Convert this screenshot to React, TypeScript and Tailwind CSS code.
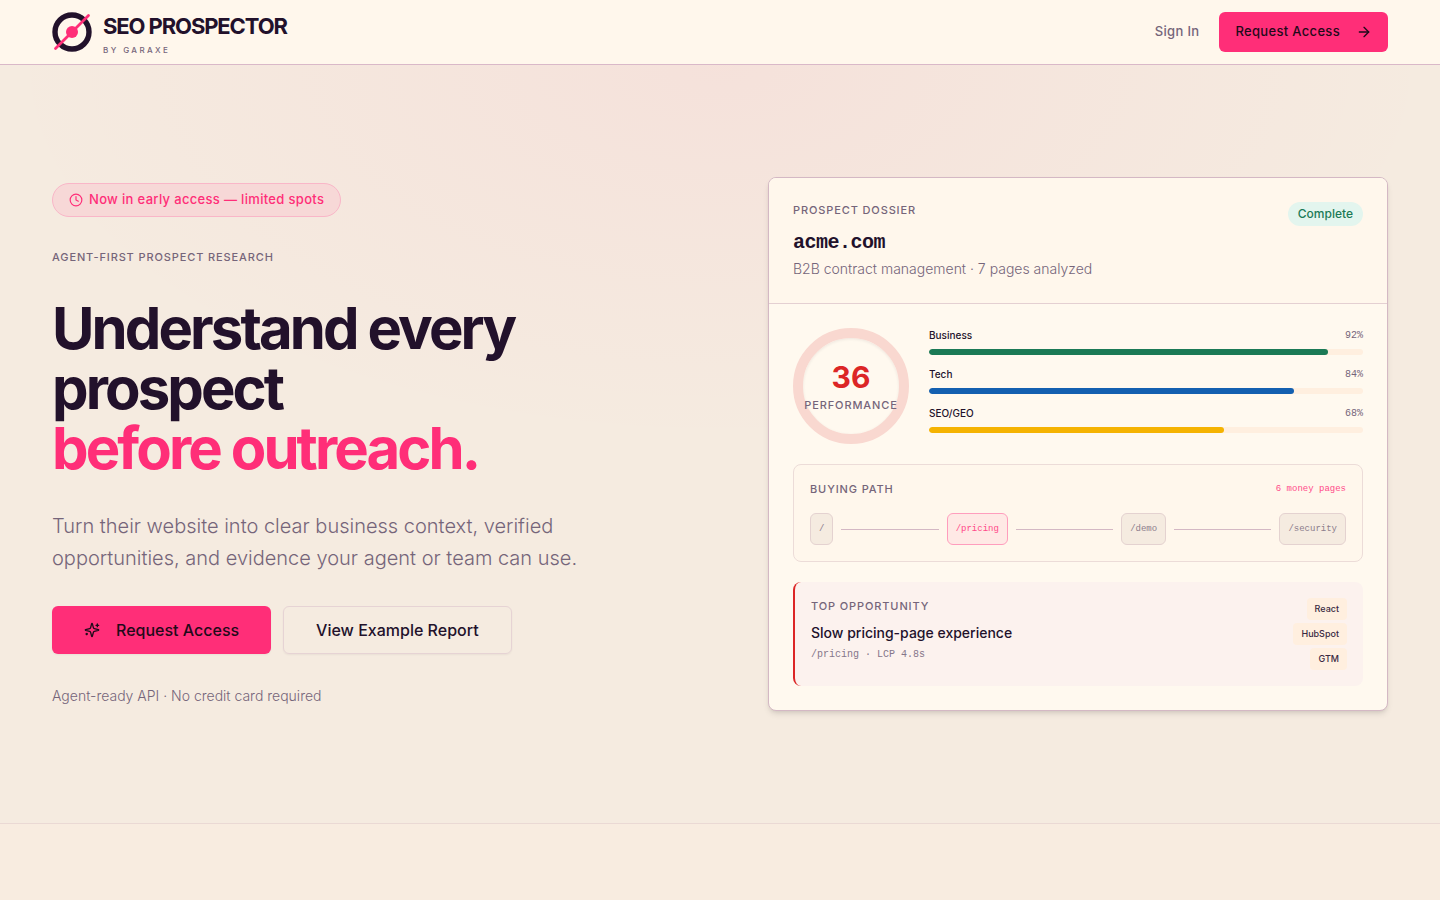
import React from 'react';
import { ArrowRight, Clock } from 'lucide-react';

interface Score {
  label: string;
  value: number;
  color: string;
}

const scores: Score[] = [
  { label: 'Business', value: 92, color: 'bg-[#1b7a56]' },
  { label: 'Tech', value: 84, color: 'bg-[#1460b0]' },
  { label: 'SEO/GEO', value: 68, color: 'bg-[#f5b301]' },
];

const path = ['/', '/pricing', '/demo', '/security'];
const stack = ['React', 'HubSpot', 'GTM'];

const Label: React.FC<{ children: React.ReactNode }> = ({ children }) => (
  <p className="text-[11px] leading-[17px] font-medium tracking-[0.08em] uppercase text-[#75657a]">
    {children}
  </p>
);

const SparklesIcon = () => (
  <svg
    width="16"
    height="16"
    viewBox="0 0 24 24"
    fill="none"
    stroke="currentColor"
    strokeWidth="2"
    strokeLinecap="round"
    strokeLinejoin="round"
    aria-hidden="true"
  >
    <path d="M9.937 15.5A2 2 0 0 0 8.5 14.063l-6.135-1.582a.5.5 0 0 1 0-.962L8.5 9.936A2 2 0 0 0 9.937 8.5l1.582-6.135a.5.5 0 0 1 .963 0L14.063 8.5A2 2 0 0 0 15.5 9.937l6.135 1.581a.5.5 0 0 1 0 .964L15.5 14.063a2 2 0 0 0-1.437 1.437l-1.582 6.135a.5.5 0 0 1-.963 0z" />
    <path d="M20 3v4" />
    <path d="M22 5h-4" />
    <path d="M4 17v2" />
    <path d="M5 18H3" />
  </svg>
);

const Logo = () => (
  <a href="#" className="flex items-center gap-[11px]">
    <svg width="40" height="40" viewBox="0 0 40 40" fill="none" aria-hidden="true">
      <circle cx="20" cy="20" r="17" stroke="#22112b" strokeWidth="5.4" />
      <path d="M3.5 36.5 36.5 3.5" stroke="#ff2e78" strokeWidth="2.8" strokeLinecap="round" />
      <circle cx="20" cy="20" r="6" fill="#ff2e78" />
    </svg>
    <span className="flex flex-col gap-1 pt-1">
      <span className="text-[22px] leading-7 font-bold tracking-tighter text-[#22112b]">SEO PROSPECTOR</span>
      <span className="text-[8px] leading-3 font-medium tracking-[0.3em] text-[#75657a]">BY GARAXE</span>
    </span>
  </a>
);

const Header = () => (
  <header className="bg-[#fff7ec] border-b border-[#d9b8c8]">
    <div className="h-16 px-13 flex items-center justify-between">
      <Logo />
      <nav className="flex items-center gap-5">
        <a href="#" className="text-[13px] font-medium tracking-wide text-[#75657a]">Sign In</a>
        <button className="h-10 px-4 rounded-md bg-[#ff2e78] text-[#1f0a1a] text-[13px] font-medium tracking-wide flex items-center gap-4">
          Request Access
          <ArrowRight size={16} />
        </button>
      </nav>
    </div>
  </header>
);

const ScoreBar: React.FC<{ score: Score }> = ({ score }) => (
  <div>
    <div className="flex justify-between text-[10px] leading-[15px] mb-1.5">
      <span className="font-medium text-[#22112b]">{score.label}</span>
      <span className="font-['Liberation_Mono',monospace] text-[#75657a]">{score.value}%</span>
    </div>
    <div className="h-1.5 rounded-full bg-[#ffefdf] overflow-hidden">
      <div className={`h-full rounded-full ${score.color}`} style={{ width: `${score.value}%` }} />
    </div>
  </div>
);

const BuyingPath = () => (
  <section className="border border-[#ecdcd8] bg-[#fff7ec] rounded-lg p-4">
    <div className="h-4 mb-4 flex items-center justify-between">
      <Label>Buying path</Label>
      <span className="pt-0.5 font-['Liberation_Mono',monospace] text-[9px] text-[#ff4a8a]">6 money pages</span>
    </div>
    <div className="flex items-center gap-2">
      {path.map((page, i) => (
        <React.Fragment key={page}>
          {i > 0 && <span className="flex-1 h-px bg-[#d4b8c4]" />}
          <span
            className={`h-8 px-2 pt-0.5 flex items-center rounded-md border font-['Liberation_Mono',monospace] text-[9px] ${
              page === '/pricing'
                ? 'border-[#ff9dbd] bg-[#ffe9e5] text-[#ff4a8a]'
                : 'border-[#e4d2d0] bg-[#f5ebe0] text-[#8c7d8c]'
            }`}
          >
            {page}
          </span>
        </React.Fragment>
      ))}
    </div>
  </section>
);

const TopOpportunity = () => (
  <section className="flex justify-between rounded-lg border-l-2 border-[#dc2626] bg-[#fcf2ee] p-4">
    <div>
      <Label>Top opportunity</Label>
      <h3 className="mt-2 text-sm leading-5 font-medium text-[#22112b]">Slow pricing-page experience</h3>
      <p className="mt-1 font-['Liberation_Mono',monospace] text-[10px] leading-[15px] text-[#85768a]">
        /pricing · LCP 4.8s
      </p>
    </div>
    <div className="flex flex-col items-end gap-[3px]">
      {stack.map((name) => (
        <span key={name} className="h-[22px] px-2 flex items-center rounded bg-[#ffefdf] text-[9px] font-medium text-[#3a2942]">
          {name}
        </span>
      ))}
    </div>
  </section>
);

const DossierCard = () => (
  <article className="rounded-lg border border-[#d4b8c4] bg-[#fff9ef] shadow-md overflow-hidden">
    <div className="flex items-start justify-between p-6 bg-[#fff7ec] border-b border-[#e4d0d2]">
      <div>
        <Label>Prospect dossier</Label>
        <h2 className="mt-2.5 font-['Liberation_Mono',monospace] text-xl leading-7 font-bold tracking-tight text-[#22112b]">
          acme.com
        </h2>
        <p className="mt-0.5 text-sm leading-5 font-light text-[#75657a]">
          B2B contract management · 7 pages analyzed
        </p>
      </div>
      <span className="h-6 px-2.5 flex items-center rounded-full bg-[#e3f5ee] text-xs font-medium text-[#1b7a56]">
        Complete
      </span>
    </div>
    <div className="p-6 flex flex-col gap-5">
      <div className="flex gap-5">
        <div className="size-29 shrink-0 rounded-full border-10 border-[#f9d8d0] inset-shadow-[0_1px_3px_rgba(34,17,43,0.08)] flex flex-col items-center justify-center gap-0.5">
          <span className="text-3xl leading-9 font-bold text-[#dc2626]">36</span>
          <Label>Performance</Label>
        </div>
        <div className="flex-1 flex flex-col gap-3">
          {scores.map((score) => (
            <ScoreBar key={score.label} score={score} />
          ))}
        </div>
      </div>
      <BuyingPath />
      <TopOpportunity />
    </div>
  </article>
);

const Hero = () => (
  <section className="px-13 py-28 grid grid-cols-2 gap-24 items-center border-b border-[#ead9d4] bg-[#f5ebe0] bg-[radial-gradient(ellipse_50%_50%_at_50%_0%,rgba(255,46,120,0.05),transparent)]">
    <div className="flex flex-col items-start gap-8">
      <p className="h-[34px] px-4 flex items-center gap-1.5 rounded-full border border-[#f9b6c8] bg-[#f7d8d7] text-[13px] font-medium tracking-wide text-[#ff2e78]">
        <Clock size={14} />
        Now in early access — limited spots
      </p>
      <Label>Agent-first prospect research</Label>
      <h1 className="text-[58px] leading-[60px] font-bold tracking-tighter text-[#22112b]">
        Understand every
        <br />
        prospect
        <span className="block text-[#ff2e78]">before outreach.</span>
      </h1>
      <p className="max-w-[560px] text-xl leading-8 font-light text-[#75657a]">
        Turn their website into clear business context, verified opportunities, and evidence your agent or team can use.
      </p>
      <div className="flex gap-3">
        <button className="h-12 px-8 flex items-center gap-4 rounded-md bg-[#ff2e78] text-base font-medium text-[#1f0a1a] shadow-xs">
          <SparklesIcon />
          Request Access
        </button>
        <button className="h-12 px-8 rounded-md border border-[#e6d3d4] text-base font-medium text-[#22112b] shadow-xs">
          View Example Report
        </button>
      </div>
      <p className="text-sm leading-5 font-light text-[#75657a]">Agent-ready API · No credit card required</p>
    </div>
    <DossierCard />
  </section>
);

const App = () => (
  <div className="min-h-screen bg-[#f8ece0] font-['Inter',sans-serif]">
    <Header />
    <main>
      <Hero />
    </main>
  </div>
);

export default App;
